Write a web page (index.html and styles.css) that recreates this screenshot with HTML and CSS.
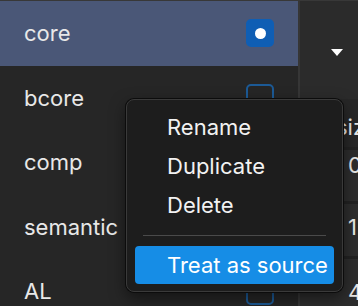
FILE: index.html
```html
<!DOCTYPE html>
<html lang="en">
<head>
    <meta charset="UTF-8">
    <meta name="viewport" content="width=device-width, initial-scale=1.0">
    <title>Token sets</title>
    <link rel="stylesheet" href="styles.css">
</head>
<body>
    <div class="panels">
        <div class="sets">
            <div class="set selected">
                <span>core</span>
                <span class="check on"><span class="dot"></span></span>
            </div>
            <div class="set">
                <span>bcore</span>
                <span class="check"></span>
            </div>
            <div class="set">
                <span>comp</span>
                <span class="check"></span>
            </div>
            <div class="set">
                <span>semantic</span>
                <span class="check"></span>
            </div>
            <div class="set">
                <span>AL</span>
                <span class="check"></span>
            </div>
        </div>
        <div class="divider"></div>
        <div class="tokens">
            <div class="toolbar">
                <span class="caret"></span>
            </div>
            <div class="head">size</div>
            <div class="cell first">0</div>
            <div class="cell second">1</div>
            <div class="cell third">4</div>
        </div>
    </div>

    <!-- context menu for the set -->
    <div class="menu">
        <div class="item">Rename</div>
        <div class="item">Duplicate</div>
        <div class="item">Delete</div>
        <div class="sep"></div>
        <div class="item active">Treat as source</div>
    </div>
</body>
</html>
```

FILE: styles.css
```css
body{
    margin: 0;
    background-color: #262626;
    color: #e8e8e8;
    font-family: 'Inter', 'Roboto', sans-serif;
    font-size: 22px;
    overflow: hidden;
}
.panels{
    display: flex;
    height: 306px;
    overflow: hidden;
    border-top: 1px solid #383838;
    box-sizing: border-box;
}
.sets{
    width: 298px;
    flex-shrink: 0;
}
.set{
    height: 64.5px;
    display: flex;
    align-items: center;
    justify-content: space-between;
    padding: 0 24px;
    box-sizing: border-box;
}
.selected{
    background-color: #4a5777;
}
.check{
    width: 28px;
    height: 28px;
    box-sizing: border-box;
    border: 2px solid #1c5a96;
    border-radius: 5px;
    display: flex;
    align-items: center;
    justify-content: center;
}
.check.on{
    background-color: #0f5eb4;
    border-color: #0f5eb4;
}
.dot{
    width: 11px;
    height: 11px;
    border-radius: 50%;
    background-color: white;
}
.divider{
    width: 2px;
    flex-shrink: 0;
    background-color: #363636;
}
.tokens{
    flex: 1;
    min-width: 0;
    overflow: hidden;
    background-color: #2b2b2b;
}
.toolbar{
    height: 98px;
    display: flex;
    align-items: center;
    justify-content: flex-end;
    padding-right: 15px;
}
.caret{
    width: 0;
    height: 0;
    border-left: 6px solid transparent;
    border-right: 6px solid transparent;
    border-top: 7px solid white;
    margin-top: 4px;
}
.head{
    height: 48px;
    box-sizing: border-box;
    padding: 14px 0 0 36px;
    line-height: 28px;
    background-color: #272727;
    white-space: nowrap;
}
.cell{
    padding-left: 48px;
    line-height: 28px;
    border-top: 3px solid #222222;
    box-sizing: border-box;
    background-color: #2d2d2d;
}
.first{
    height: 54px;
    padding-top: 1px;
}
.second{
    height: 55px;
    padding-top: 9px;
}
.third{
    height: 60px;
    padding-top: 19px;
}
.menu{
    position: absolute;
    left: 126px;
    top: 99px;
    width: 217px;
    height: 193px;
    box-sizing: border-box;
    padding: 8px;
    background-color: #1d1d1d;
    border: 1px solid #3a3a3a;
    border-radius: 8px;
    box-shadow: 0 0 0 1px #0c0c0c, 0 6px 16px rgba(0,0,0,0.5);
    color: #f2f2f2;
}
.item{
    height: 39px;
    line-height: 39px;
    padding-left: 32px;
    border-radius: 4px;
    white-space: nowrap;
}
.sep{
    height: 1px;
    margin: 10px 8px 10px 8px;
    background-color: #4a4a4a;
}
.active{
    background-color: #168de6;
    color: white;
    height: 38px;
    line-height: 38px;
}
```
